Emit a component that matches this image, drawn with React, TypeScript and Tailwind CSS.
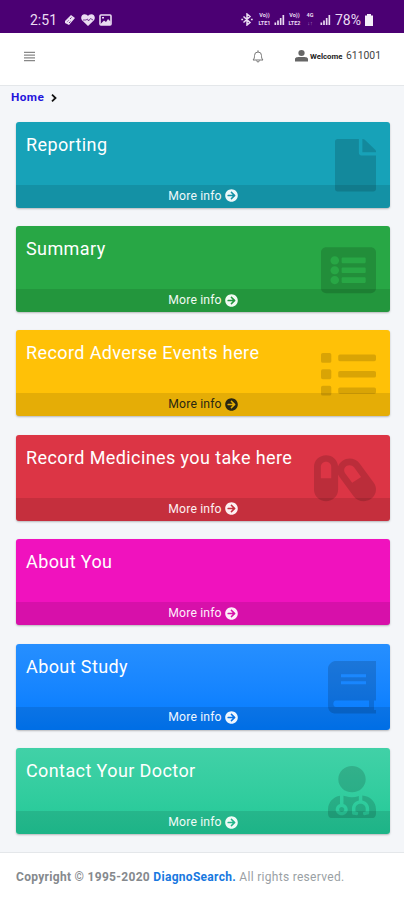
import React from "react";
import {
  FaArrowCircleRight,
  FaCapsules,
  FaFile,
  FaList,
  FaListAlt,
  FaUserMd,
} from "react-icons/fa";

// square-cornered book used for the study card
const BookIcon = (props: React.SVGProps<SVGSVGElement>) => (
  <svg viewBox="0 0 48 52" fill="currentColor" {...props}>
    <path
      fillRule="evenodd"
      d="M7 0h41v39h-2v9.500h2V52H8c-5 0-8-3-8-7.500V7c0-3 4-7 7-7zM13 13v3h25v-3zM13 20v3h25v-3zM8 39c-3.500 0-3.500 6.500 0 6.500h33V39z"
    />
  </svg>
);

const cards = [
  { title: "Reporting", bg: "bg-[#17a2b8]", icon: FaFile, size: "w-[41px]", link: "text-[#eef8fa]" },
  { title: "Summary", bg: "bg-[#28a745]", icon: FaListAlt, size: "w-[55px]", link: "text-[#f1faf3]" },
  { title: "Record Adverse Events here", bg: "bg-[#ffc107]", icon: FaList, size: "w-[55px]", link: "text-[#2a2712]" },
  { title: "Record Medicines you take here", bg: "bg-[#dc3545]", icon: FaCapsules, size: "w-[62px]", link: "text-[#fdf0f1]" },
  { title: "About You", bg: "bg-[#f012be]", icon: null, size: "", link: "text-[#feeefa]" },
  { title: "About Study", bg: "bg-linear-to-b from-[#268fff] to-[#007bff]", icon: BookIcon, size: "w-[48px]", link: "text-[#eef6ff]" },
  { title: "Contact Your Doctor", bg: "bg-linear-to-b from-[#41d1a7] to-[#20c997]", icon: FaUserMd, size: "w-[48px]", link: "text-[#effbf7]" },
];

const Signal = ({ className = "" }: { className?: string }) => (
  <svg viewBox="0 0 12 12" className={`h-[10px] w-[11px] ${className}`} fill="currentColor">
    <path d="M0 9h2v3H0zM3.2 6.5h2V12h-2zM6.4 3.5h2V12h-2zM9.6 0h2v12h-2z" />
  </svg>
);

const Volte = ({ bottom }: { bottom: string }) => (
  <span className="flex w-[15px] flex-col items-center gap-px text-[5.500px] font-bold leading-[7px]">
    <span>Vo))</span>
    <span>{bottom}</span>
  </span>
);

const StatusBar = () => (
  <div className="flex h-[32.500px] items-center bg-[#4b0073] pt-[7px] text-[#eadcf2]">
    <span className="ml-[30px] w-[34px] text-[14px] leading-none">2:51</span>
    {/* notification icons */}
    <svg viewBox="0 0 12 12" className="h-[12px] w-[12px]" fill="currentColor">
      <path d="M1 7 7 1l4 3-6 7-4-2z" />
      <path d="m3.500 7.500 1-1M6 5l1.500-1.500M5 9l1.500-1.500" stroke="#4b0073" strokeWidth=".8" />
    </svg>
    <svg viewBox="0 0 14 12" className="ml-[5px] h-[12px] w-[14px]" fill="currentColor">
      <path d="M7 12 1 6.2C-.8 3.8.5.3 3.7.3 5.2.3 6.3 1 7 2 7.700 1 8.800.3 10.300.3c3.200 0 4.500 3.500 2.700 5.900z" />
      <path d="M2 6h3l1.500-1L7.500 7l2-2.500L12 6" fill="none" stroke="#4b0073" strokeWidth=".7" />
    </svg>
    <svg viewBox="0 0 13 12" className="ml-[4px] h-[12px] w-[13px]" fill="none" stroke="currentColor">
      <rect x="1" y="1" width="11" height="10" rx="1" strokeWidth="1.600" />
      <path d="m2 9.500 3-3 2 1.500 2-3 2.500 2.500V11H2z" fill="currentColor" stroke="none" />
      <rect x="3" y="3" width="2" height="1.500" fill="currentColor" stroke="none" />
    </svg>

    <svg viewBox="0 0 12 13" className="ml-[129px] h-[13px] w-[12px]" fill="none" stroke="currentColor" strokeWidth="1.500">
      <path d="m2.500 3.500 6.500 6L6 12V1l3 2.500-6.500 6M.3 6.500h1.800M9.900 6.500h1.800" />
    </svg>
    <div className="ml-[4px] w-[17px]"><Volte bottom="LTE1" /></div>
    <Signal />
    <div className="ml-[2px] w-[17px]"><Volte bottom="LTE2" /></div>
    <span className="ml-[1px] flex w-[10px] flex-col items-center gap-px text-[5.500px] font-bold leading-[7px]">
      <span>4G</span>
      <span className="opacity-60">↓↑</span>
    </span>
    <Signal className="ml-[5px]" />
    <span className="ml-[4px] w-[29px] text-[14px] leading-none">78%</span>
    <svg viewBox="0 0 8 12" className="ml-[1px] h-[12px] w-[8px]" fill="#f5eef9">
      <path d="M2 0h4v1.500h2V12H0V1.500h2z" />
    </svg>
  </div>
);

const Navbar = () => (
  <header className="flex h-[53px] items-center border-b border-[#e4e7ea] bg-white text-[#444]">
    <svg viewBox="0 0 12 12" preserveAspectRatio="none" className="ml-[24px] mb-[5px] h-[11px] w-[11px]" stroke="#888" strokeWidth="1.200">
      <path d="M0 1.500h12M0 4.500h12M0 7.500h12M0 10.500h12" />
    </svg>
    <svg viewBox="0 0 12 13" className="ml-[217px] mb-[5px] h-[13px] w-[12px]" fill="none" stroke="#777" strokeWidth="1">
      <path d="M1 10c1.400-1.300 1.500-2.700 1.500-4.500a3.500 3.500 0 0 1 7 0C9.500 7.300 9.600 8.700 11 10zM6 .3V2M4.500 10.500c.3 2 2.700 2 3 0" />
    </svg>
    <svg viewBox="0 0 12 12" preserveAspectRatio="none" className="ml-[31px] mb-[5px] h-[12px] w-[13px]" fill="#666">
      <circle cx="6" cy="3" r="2.900" />
      <path d="M0 11.500V9.300c0-2.500 3-2.300 6-2.300s6-.2 6 2.300v2.200z" />
    </svg>
    <span className="ml-[2px] mb-[3px] w-[36px] whitespace-nowrap text-[7.800px] font-bold leading-none text-[#222]">Welcome</span>
    <span className="mb-[4px] text-[10.400px] leading-none">611001</span>
  </header>
);

export default function App() {
  return (
    <div className="flex h-[900px] w-[404px] flex-col overflow-hidden bg-[#f4f6f9] font-['Roboto',sans-serif]">
      <StatusBar />
      <Navbar />

      <nav className="flex h-[24px] items-center pl-[11px] text-[11.800px] font-bold tracking-[0.400px] text-[#2314dc]">
        <span className="w-[40px]">Home</span>
        <svg viewBox="0 0 6 8" className="h-[8px] w-[6px]" fill="none" stroke="#111" strokeWidth="1.800">
          <path d="m1 .7 3.500 3.300L1 7.300" />
        </svg>
      </nav>

      <main className="flex flex-1 flex-col gap-[18.400px] pl-[16px] pr-[14px] pt-[12.200px]">
        {cards.map(({ title, bg, icon: Icon, size, link }) => (
          <section
            key={title}
            className={`relative flex h-[86px] shrink-0 flex-col justify-between overflow-hidden rounded-[3px] shadow-[0_1px_2px_rgba(0,0,0,0.25)] ${bg}`}
          >
            <h3 className="pl-[10px] pt-[10px] text-[18px] leading-[25px] tracking-[0.400px] text-white">{title}</h3>
            {Icon && (
              <Icon
                preserveAspectRatio="none"
                className={`absolute right-[14.500px] top-[17.500px] h-[52.500px] text-black/15 ${size}`}
              />
            )}
            <a className={`flex h-[23px] items-center justify-center gap-[3px] bg-black/10 pb-px text-[12.200px] tracking-[0.150px] ${link}`}>
              More info <FaArrowCircleRight className="h-[13px] w-[13px]" />
            </a>
          </section>
        ))}
      </main>

      <footer className="h-[48px] border-t border-[#e4e7ea] bg-white pl-[16px] pt-[15px] text-[12px] leading-[18px] tracking-[0.300px] text-[#9a9fa4]">
        <strong className="text-[#85898d]">
          Copyright © 1995-2020 <span className="text-[#1878e0]">DiagnoSearch.</span>
        </strong>{" "}
        All rights reserved.
      </footer>
    </div>
  );
}
